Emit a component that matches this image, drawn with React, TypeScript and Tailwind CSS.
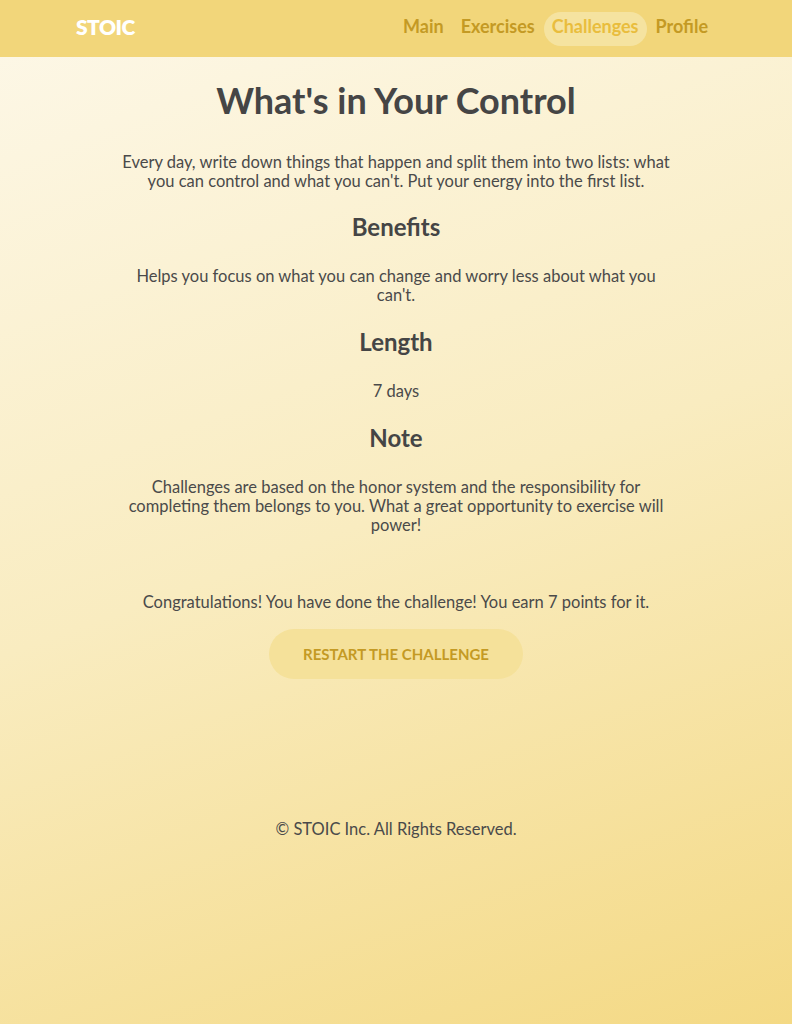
import React from "react";

export default function App() {
  const font = { fontFamily: "Lato, 'Noto Sans', 'Liberation Sans', sans-serif" };
  return (
    <div
      className="min-h-[1024px] w-full flex flex-col bg-[linear-gradient(160deg,#fdf8e9_0%,#f9ecc0_50%,#f4d984_100%)] text-[#4a4a4a]"
      style={font}
    >
      <header className="h-[57px] bg-[#f2d67a] flex items-center justify-between pl-[76px] pr-[76px]">
        <div className="text-white font-extrabold text-[21px] tracking-tight pb-[4px]">STOIC</div>
        <nav className="flex items-center gap-[1px] text-[18px] font-bold">
          <a className="px-2 h-[34px] flex items-center pb-[4px] text-[#c49a24]">Main</a>
          <a className="px-2 h-[34px] flex items-center pb-[4px] text-[#c49a24]">Exercises</a>
          <a className="px-2 h-[34px] flex items-center pb-[4px] rounded-full bg-[#f5e3a0] text-[#e9bd3d]">Challenges</a>
          <a className="px-2 h-[34px] flex items-center pb-[4px] text-[#c49a24]">Profile</a>
        </nav>
      </header>
      <main className="flex flex-col items-center text-center">
        <div className="w-[556px] flex flex-col items-center text-[16.5px] leading-[19px]">
          <h1 className="mt-[22px] text-[36px] font-bold leading-[42px] text-[#454545]">What's in Your Control</h1>
          <p className="mt-[32px]">
            Every day, write down things that happen and split them into two lists: what you can control and what you can't. Put your energy into the first list.
          </p>
          <h2 className="mt-[21px] text-[24px] font-bold leading-[30px] text-[#454545]">Benefits</h2>
          <p className="mt-[25px]">
            Helps you focus on what you can change and worry less about what you can't.
          </p>
          <h2 className="mt-[22px] text-[24px] font-bold leading-[30px] text-[#454545]">Length</h2>
          <p className="mt-[25px]">7 days</p>
          <h2 className="mt-[22px] text-[24px] font-bold leading-[30px] text-[#454545]">Note</h2>
          <p className="mt-[25px]">
            Challenges are based on the honor system and the responsibility for completing them belongs to you. What a great opportunity to exercise will power!
          </p>
          <p className="mt-[58px]">
            Congratulations! You have done the challenge! You earn 7 points for it.
          </p>
          <button className="mt-[17px] w-[254px] h-[50px] rounded-full bg-[#f5e19a] text-[#c49a24] font-bold text-[15px] uppercase">
            Restart the challenge
          </button>
          <p className="mt-[141px]">© STOIC Inc. All Rights Reserved.</p>
        </div>
      </main>
    </div>
  );
}
